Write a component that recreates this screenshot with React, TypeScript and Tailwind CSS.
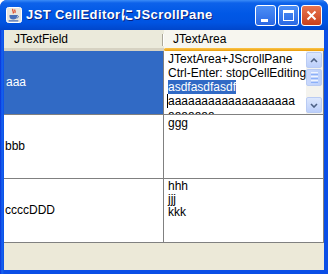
import { FC } from "react";

const cellFont = { fontFamily: '"Liberation Sans", Arial, sans-serif' };

// small Java coffee-cup icon in the title bar
const JavaIcon: FC = () => (
  <svg width="16" height="16" viewBox="0 0 16 16">
    <rect x="0.5" y="0.5" width="15" height="15" rx="2" fill="#e8e6de" stroke="#ffffff" />
    <path d="M7 2 C5.5 3.5 8.5 4.5 7 6.5 M9 2.5 C8 3.8 10 4.5 8.8 6" stroke="#e0401c" strokeWidth="1.2" fill="none" />
    <path d="M3.5 8 H11 V9.5 C11 11.5 9.5 12.5 7.2 12.5 C5 12.5 3.5 11.5 3.5 9.5 Z" fill="#4a6fb8" />
    <path d="M11 8.6 C13 8.6 13 10.8 10.6 11" stroke="#4a6fb8" strokeWidth="1" fill="none" />
    <rect x="2.5" y="13.2" width="10" height="1.2" rx="0.6" fill="#4a6fb8" />
  </svg>
);

const ArrowUp: FC = () => (
  <svg width="8" height="5" viewBox="0 0 8 5">
    <path d="M1 4 L4 1 L7 4" stroke="#4d6185" strokeWidth="1.6" fill="none" />
  </svg>
);

const ArrowDown: FC = () => (
  <svg width="8" height="5" viewBox="0 0 8 5">
    <path d="M1 1 L4 4 L7 1" stroke="#4d6185" strokeWidth="1.6" fill="none" />
  </svg>
);

const ScrollBtn: FC<{ children: React.ReactNode }> = ({ children }) => (
  <div className="flex h-[16px] w-[16px] items-center justify-center rounded-[2px] border border-[#b9cbf3] bg-[linear-gradient(to_bottom,#dce7fd,#bccffb)]">
    {children}
  </div>
);

export default function App() {
  return (
    <div className="h-[274px] w-[328px] bg-white">
      <div className="flex h-[274px] w-[328px] flex-col overflow-hidden rounded-t-[7px] bg-[#0a3fd2]">
        {/* TITLE BAR */}
        <div className="flex h-[30px] items-center bg-[linear-gradient(to_bottom,#3b8cf7_0%,#0d62ea_10%,#0058e6_45%,#0054e2_75%,#0046cb_100%)] pl-[6px] pr-[6px]">
          <JavaIcon />
          <span
            className="ml-[4px] text-[13px] font-bold tracking-[0.4px] text-white [text-shadow:1px_1px_0_#0a1f7a]"
            style={{ fontFamily: '"Liberation Sans", "Noto Sans CJK JP", sans-serif' }}
          >
            JST CellEditorにJScrollPane
          </span>
          <div className="ml-auto flex gap-[2px]">
            <div className="relative h-[21px] w-[21px] rounded-[3px] border border-white bg-[linear-gradient(to_bottom,#4d8ff6,#2a68e4)]">
              <div className="absolute left-[5px] top-[13px] h-[3px] w-[7px] bg-white" />
            </div>
            <div className="flex h-[21px] w-[21px] items-center justify-center rounded-[3px] border border-white bg-[linear-gradient(to_bottom,#4d8ff6,#2a68e4)]">
              <div className="h-[11px] w-[11px] border border-t-[3px] border-white" />
            </div>
            <div className="flex h-[21px] w-[21px] items-center justify-center rounded-[3px] border border-white bg-[linear-gradient(to_bottom,#e8754f,#c9401c)]">
              <svg width="11" height="11" viewBox="0 0 11 11">
                <path d="M1.5 1.5 L9.5 9.5 M9.5 1.5 L1.5 9.5" stroke="#ffffff" strokeWidth="2" />
              </svg>
            </div>
          </div>
        </div>

        {/* WINDOW BODY */}
        <div className="flex flex-1 bg-[linear-gradient(to_right,#0831d9_0px,#1664f0_2px,#0a4ee6_4px)] pb-[4px] pl-[4px] pr-[4px]">
          <div className="flex flex-1 flex-col bg-[#ece9d8]" style={cellFont}>
            {/* HEADER */}
            <div className="grid h-[21px] grid-cols-[160px_160px] text-[12px] text-black">
              <div className="relative flex items-center border-b-[3px] border-[#d6d2c2] bg-[#ebeadb] pl-[10px]">
                JTextField
                <div className="absolute right-0 top-[4px] h-[12px] w-[2px] border-l border-[#aca899] border-r border-r-white" />
              </div>
              <div className="flex flex-col bg-[#f7f6ef]">
                <div className="flex flex-1 items-center pl-[9px]">JTextArea</div>
                <div className="h-[3px] rounded-l-[2px] bg-[linear-gradient(to_bottom,#fcc54a,#e99c0a)]" />
              </div>
            </div>

            {/* TABLE ROWS */}
            <div className="grid grid-cols-[160px_160px] grid-rows-[64px_64px_64px] text-[12px] leading-[13px]">
              {/* row 1 */}
              <div className="flex items-center border-b border-r border-[#808080] bg-[#316ac5] pl-[2px] text-white">
                aaa
              </div>
              <div className="flex overflow-hidden border-b border-r border-[#808080] bg-white">
                <div className="flex-1 overflow-hidden whitespace-nowrap pl-[4px] pt-[1px] leading-[14px] text-black">
                  <div>JTextArea+JScrollPane</div>
                  <div>Ctrl-Enter: stopCellEditing</div>
                  <div>
                    <span className="bg-[#316ac5] text-white">asdfasdfasdf</span>
                  </div>
                  <div className="relative">
                    <span className="absolute left-[-1px] top-0 h-[14px] w-[1px] bg-black" />
                    aaaaaaaaaaaaaaaaaaa
                  </div>
                  <div>aaaaaaa</div>
                </div>
                <div className="flex w-[17px] flex-col bg-[#f4f3ee] py-[1px] pr-[1px]">
                  <ScrollBtn>
                    <ArrowUp />
                  </ScrollBtn>
                  <div className="mt-[1px] flex h-[17px] w-[16px] flex-col items-center justify-center gap-[1px] rounded-[2px] border border-[#b9cbf3] bg-[linear-gradient(to_right,#c9d8fc,#bcd0fb)]">
                    <div className="h-[1px] w-[7px] bg-[#eef4fe]" />
                    <div className="h-[1px] w-[7px] bg-[#8cb0f8]" />
                    <div className="h-[1px] w-[7px] bg-[#eef4fe]" />
                    <div className="h-[1px] w-[7px] bg-[#8cb0f8]" />
                    <div className="h-[1px] w-[7px] bg-[#eef4fe]" />
                    <div className="h-[1px] w-[7px] bg-[#8cb0f8]" />
                  </div>
                  <div className="flex-1" />
                  <ScrollBtn>
                    <ArrowDown />
                  </ScrollBtn>
                </div>
              </div>

              {/* row 2 */}
              <div className="flex items-center border-b border-r border-[#808080] bg-white pl-[1px] text-black">
                bbb
              </div>
              <div className="border-b border-r border-[#808080] bg-white pl-[4px] pt-[2px] text-black">
                ggg
              </div>

              {/* row 3 */}
              <div className="flex items-center border-b border-r border-[#808080] bg-white pl-[1px] text-black">
                ccccDDD
              </div>
              <div className="border-b border-r border-[#808080] bg-white pl-[4px] pt-[1px] text-black">
                <div>hhh</div>
                <div>jjj</div>
                <div>kkk</div>
              </div>
            </div>

            <div className="flex-1 bg-[#ece9d8]" />
          </div>
        </div>
      </div>
    </div>
  );
}
